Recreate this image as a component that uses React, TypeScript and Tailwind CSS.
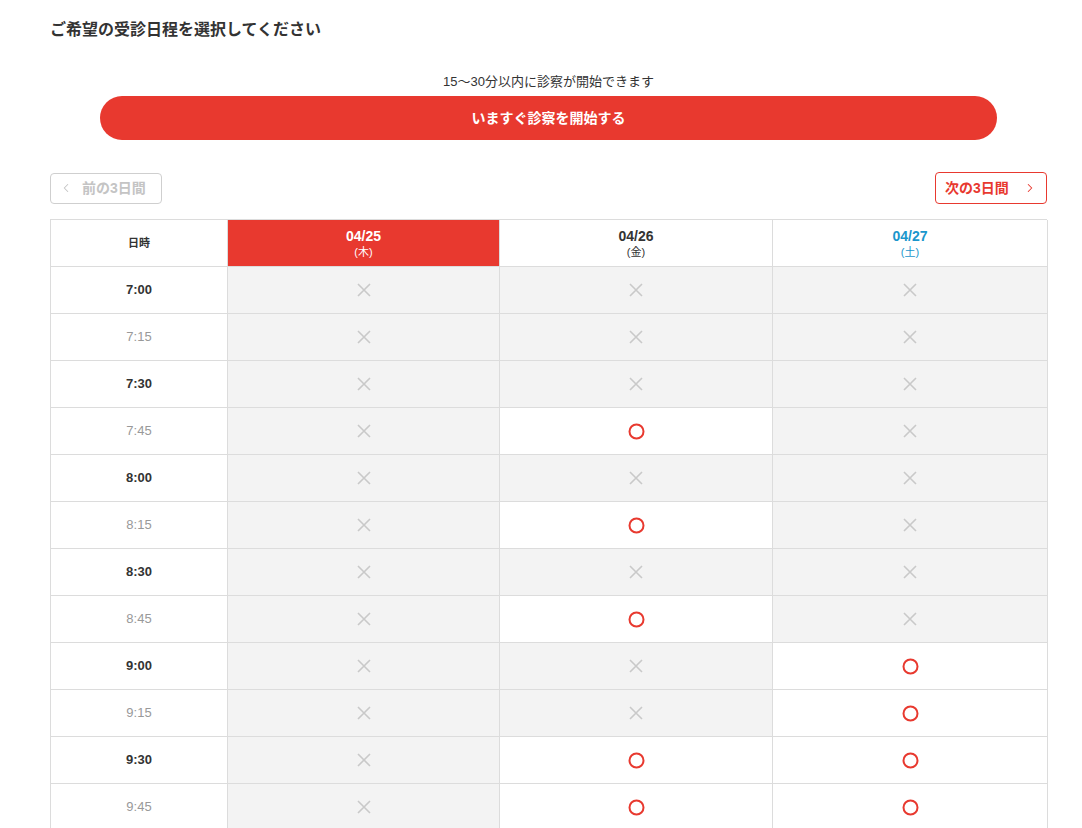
import React from 'react';
import { ChevronLeft, ChevronRight } from 'lucide-react';

const FONT = { fontFamily: '"Liberation Sans", "Noto Sans CJK JP", sans-serif' };

type Slot = { time: string; marks: [boolean, boolean, boolean] };

// true = 予約可 (○), false = 不可 (×)
const slots: Slot[] = [
  { time: '7:00', marks: [false, false, false] },
  { time: '7:15', marks: [false, false, false] },
  { time: '7:30', marks: [false, false, false] },
  { time: '7:45', marks: [false, true, false] },
  { time: '8:00', marks: [false, false, false] },
  { time: '8:15', marks: [false, true, false] },
  { time: '8:30', marks: [false, false, false] },
  { time: '8:45', marks: [false, true, false] },
  { time: '9:00', marks: [false, false, true] },
  { time: '9:15', marks: [false, false, true] },
  { time: '9:30', marks: [false, true, true] },
  { time: '9:45', marks: [false, true, true] },
];

const days = [
  { date: '04/25', week: '(木)', cls: 'bg-[#e8392f] text-white' },
  { date: '04/26', week: '(金)', cls: 'bg-white text-[#333]' },
  { date: '04/27', week: '(土)', cls: 'bg-white text-[#1a96cc]' },
];

const Cross = () => (
  <svg width="14" height="14" viewBox="0 0 14 14" fill="none">
    <path d="M1 1L13 13M13 1L1 13" stroke="#c9c9c9" strokeWidth="1.6" />
  </svg>
);

const Circle = () => (
  <svg width="17" height="17" viewBox="0 0 17 17" fill="none">
    <circle cx="8.5" cy="8.5" r="7" stroke="#e8392f" strokeWidth="2" />
  </svg>
);

const COLS = 'grid grid-cols-[177px_272px_273px_275px]';

export default function App() {
  return (
    <div className="min-h-screen bg-white text-[#333]" style={FONT}>
      <div className="w-[1097px] px-[50px] pt-[19px]">
        <h1 className="text-[16px] font-bold leading-[22px] text-[#333]">ご希望の受診日程を選択してください</h1>

        <div className="mt-[32px] flex flex-col items-center">
          <p className="text-[13px] leading-[18px] text-[#333]">15〜30分以内に診察が開始できます</p>
          <button className="mt-[5px] h-[44px] w-[897px] rounded-full bg-[#e8392f] text-[14px] font-bold text-white">
            いますぐ診察を開始する
          </button>
        </div>

        <div className="mt-[32px] flex w-[997px] items-center justify-between">
          <button className="flex h-[31px] w-[112px] items-center gap-[9px] rounded-[4px] border border-[#cfcfcf] pl-[8px] text-[14px] font-bold text-[#c4c4c4]">
            <ChevronLeft size={14} strokeWidth={1.8} />
            <span>前の3日間</span>
          </button>
          <button className="flex h-[32px] w-[112px] items-center justify-between rounded-[4px] border border-[#e8392f] px-[9px] text-[14px] font-bold text-[#e8392f]">
            <span>次の3日間</span>
            <ChevronRight size={14} strokeWidth={1.8} />
          </button>
        </div>

        <div className="mt-[15px] w-[997px] border-l border-t border-[#dcdcdc]">
          <div className={`${COLS} h-[47px]`}>
            <div className="flex items-center justify-center border-b border-r border-[#dcdcdc] text-[11px] font-bold text-[#333]">
              日時
            </div>
            {days.map((d) => (
              <div
                key={d.date}
                className={`flex flex-col items-center justify-center border-b border-r border-[#dcdcdc] ${d.cls}`}
              >
                <span className="text-[14px] font-bold leading-[17px]">{d.date}</span>
                <span className="text-[11px] leading-[14px]">{d.week}</span>
              </div>
            ))}
          </div>
          {slots.map((s) => {
            const major = s.time.endsWith(':00') || s.time.endsWith(':30');
            return (
              <div key={s.time} className={`${COLS} h-[47px]`}>
                <div
                  className={`flex items-center justify-center border-b border-r border-[#dcdcdc] text-[13px] ${
                    major ? 'font-bold text-[#333]' : 'text-[#999]'
                  }`}
                >
                  {s.time}
                </div>
                {s.marks.map((ok, i) => (
                  <div
                    key={i}
                    className={`flex items-center justify-center border-b border-r border-[#dcdcdc] ${
                      ok ? 'bg-white' : 'bg-[#f3f3f3]'
                    }`}
                  >
                    {ok ? <Circle /> : <Cross />}
                  </div>
                ))}
              </div>
            );
          })}
        </div>
      </div>
    </div>
  );
}
